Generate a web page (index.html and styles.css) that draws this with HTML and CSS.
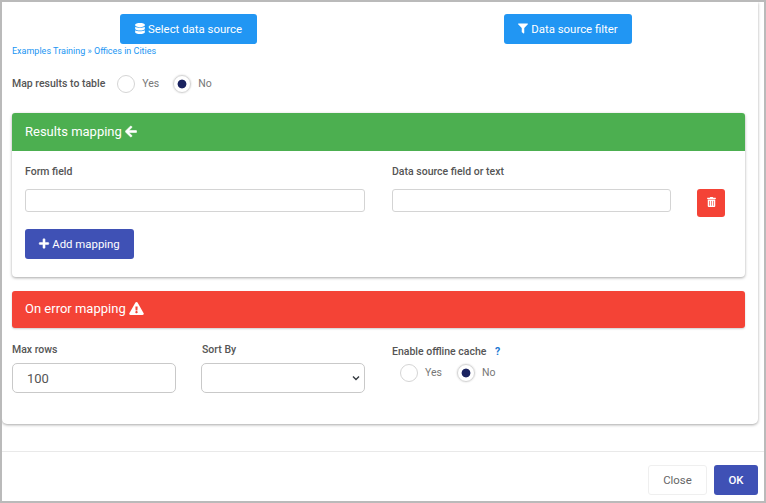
FILE: index.html
```html
<!DOCTYPE html>
<html>
<head>
<meta charset="UTF-8">
<title>Mapping</title>
<link rel="stylesheet" href="styles.css">
</head>
<body>
<div class="window">
  <div class="panel">
    <div class="source_buttons">
      <button class="btn btn_blue btn_select">
        <svg class="icon" viewBox="0 0 448 512"><path d="M448 73.143v45.714C448 159.143 347.667 192 224 192S0 159.143 0 118.857V73.143C0 32.857 100.333 0 224 0s224 32.857 224 73.143zM448 176v102.857C448 319.143 347.667 352 224 352S0 319.143 0 278.857V176c48.125 33.143 136.208 48.572 224 48.572S399.874 209.143 448 176zm0 160v102.857C448 479.143 347.667 512 224 512S0 479.143 0 438.857V336c48.125 33.143 136.208 48.572 224 48.572S399.874 369.143 448 336z"/></svg>
        Select data source
      </button>
      <button class="btn btn_blue btn_filter">
        <svg class="icon" viewBox="0 0 512 512"><path d="M487.976 0H24.028C2.71 0-8.047 25.866 7.058 40.971L192 225.941V432c0 7.831 3.821 15.17 10.237 19.662l80 55.98C298.02 518.69 320 507.493 320 487.98V225.941l184.947-184.97C520.021 25.896 509.338 0 487.976 0z"/></svg>
        Data source filter
      </button>
    </div>
    <div class="crumbs">Examples Training » Offices in Cities</div>

    <div class="map_row">
      <span class="field_label">Map results to table</span>
      <label class="radio radio_first"><input type="radio" name="maptable"> Yes</label>
      <label class="radio"><input type="radio" name="maptable" checked> No</label>
    </div>

    <div class="section">
      <div class="section_head head_green">Results mapping
        <svg class="head_icon" viewBox="0 0 448 512"><path d="M257.5 445.1l-22.2 22.2c-9.4 9.4-24.6 9.4-33.9 0L7 273c-9.4-9.4-9.4-24.6 0-33.9L201.4 44.7c9.4-9.4 24.6-9.4 33.9 0l22.2 22.2c9.5 9.5 9.3 25-.4 34.3L136.6 216H424c13.3 0 24 10.7 24 24v32c0 13.3-10.7 24-24 24H136.6l120.5 114.8c9.8 9.3 10 24.8.4 34.3z"/></svg>
      </div>
      <div class="section_body">
        <div class="mapping_row">
          <div class="col_form">
            <div class="field_label">Form field</div>
            <input class="text_input" type="text">
          </div>
          <div class="col_source">
            <div class="field_label">Data source field or text</div>
            <input class="text_input" type="text">
          </div>
          <button class="btn_trash">
            <svg viewBox="0 0 448 512"><path d="M32 464a48 48 0 0 0 48 48h288a48 48 0 0 0 48-48V128H32zm272-256a16 16 0 0 1 32 0v224a16 16 0 0 1-32 0zm-96 0a16 16 0 0 1 32 0v224a16 16 0 0 1-32 0zm-96 0a16 16 0 0 1 32 0v224a16 16 0 0 1-32 0zM432 32H312l-9.4-18.7A24 24 0 0 0 281.1 0H166.8a23.72 23.72 0 0 0-21.4 13.3L136 32H16A16 16 0 0 0 0 48v32a16 16 0 0 0 16 16h416a16 16 0 0 0 16-16V48a16 16 0 0 0-16-16z"/></svg>
          </button>
        </div>
        <button class="btn btn_indigo btn_add">
          <svg class="icon icon_bold" viewBox="0 0 448 512"><path d="M416 208H272V64c0-17.67-14.33-32-32-32h-32c-17.67 0-32 14.33-32 32v144H32c-17.67 0-32 14.33-32 32v32c0 17.67 14.33 32 32 32h144v144c0 17.67 14.33 32 32 32h32c17.67 0 32-14.33 32-32V304h144c17.67 0 32-14.33 32-32v-32c0-17.67-14.33-32-32-32z"/></svg>
          Add mapping
        </button>
      </div>
    </div>

    <div class="section_head head_red">On error mapping
      <svg class="head_icon warn_icon" viewBox="0 0 576 512"><path d="M569.517 440.013C587.975 472.007 564.806 512 527.94 512H48.054c-36.937 0-59.999-40.055-41.577-71.987L246.423 24.015c18.467-32.009 64.72-31.951 83.154 0l239.94 416zM288 354c-25.405 0-46 20.595-46 46s20.595 46 46 46 46-20.595 46-46-20.595-46-46-46zm-43.673-165.346l7.418 136c.347 6.364 5.609 11.346 11.982 11.346h48.546c6.373 0 11.635-4.982 11.982-11.346l7.418-136c.375-6.874-5.098-12.654-11.982-12.654h-63.383c-6.884 0-12.356 5.78-11.981 12.654z"/></svg>
    </div>

    <div class="options_row">
      <div class="col_rows">
        <div class="field_label">Max rows</div>
        <input class="big_input" type="text" value="100">
      </div>
      <div class="col_sort">
        <div class="field_label">Sort By</div>
        <select class="big_select"><option></option></select>
      </div>
      <div class="col_cache">
        <div class="field_label">Enable offline cache <span class="help">?</span></div>
        <div class="cache_radios">
          <label class="radio radio_first"><input type="radio" name="cache"> Yes</label>
          <label class="radio"><input type="radio" name="cache" checked> No</label>
        </div>
      </div>
    </div>
  </div>

  <div class="footer">
    <button class="btn btn_close">Close</button>
    <button class="btn btn_indigo btn_ok">OK</button>
  </div>
</div>
</body>
</html>
```

FILE: styles.css
```css
* {
  box-sizing: border-box;
}

html, body {
  height: 100%;
  margin: 0px;
}

body {
  background: #ffffff;
  font-family: Roboto, "Liberation Sans", sans-serif;
  color: #555555;
}

.window {
  display: flex;
  flex-direction: column;
  width: 766px;
  height: 503px;
  border: 2px solid #bababa;
  background: #ffffff;
  overflow: hidden;
}

.panel {
  width: 756px;
  height: 422px;
  padding: 12px 13px 0 10px;
  border-radius: 0 0 5px 5px;
  box-shadow: 0 1px 3px rgba(0,0,0,0.35);
}

.source_buttons {
  display: flex;
  padding-left: 108px;
  gap: 247px;
}

.btn {
  display: inline-flex;
  align-items: center;
  justify-content: center;
  height: 30px;
  padding: 0 0 1px;
  border: none;
  border-radius: 3px;
  font: 400 11.4px Roboto, "Liberation Sans", sans-serif;
  color: #ffffff;
}

.btn_blue {
  background: #2196f3;
}

.btn_indigo {
  background: #3f51b5;
}

.btn_select {
  width: 137px;
}

.btn_filter {
  width: 128px;
}

.icon {
  width: 10px;
  height: 11px;
  margin-right: 3px;
  fill: #ffffff;
}

.icon_bold {
  stroke: #ffffff;
  stroke-width: 24;
  overflow: visible;
}

.crumbs {
  margin-top: 1px;
  height: 12px;
  font-size: 9px;
  line-height: 12px;
  color: #2196f3;
}

.map_row {
  display: flex;
  align-items: center;
  height: 20px;
  margin-top: 17px;
}

.field_label {
  font-size: 10.5px;
  font-weight: 500;
  line-height: 14px;
  color: #555555;
}

.radio {
  display: inline-flex;
  align-items: center;
  font-size: 10.5px;
  color: #777777;
  line-height: 14px;
  margin-right: 15px;
}

.radio input {
  appearance: none;
  -webkit-appearance: none;
  width: 18px;
  height: 18px;
  margin: 0 7px 0 0;
  border: 1px solid #d5d5d5;
  border-radius: 50%;
  background: #ffffff;
}

.radio input:checked {
  background: radial-gradient(circle, #1a2360 0, #1a2360 4px, #ffffff 4.8px);
  box-shadow: 0 0 2px rgba(0,0,0,0.2);
}

.map_row .radio_first {
  margin-left: 12px;
  margin-right: 14px;
}

.section {
  margin-top: 19px;
  height: 164px;
  border-radius: 4px;
  box-shadow: 0 1px 3px rgba(0,0,0,0.35);
}

.section_head {
  height: 38px;
  padding-left: 13px;
  border-radius: 3px 3px 0 0;
  font-size: 13px;
  font-weight: 400;
  line-height: 37px;
  color: #ffffff;
}

.head_green {
  background: #4caf50;
}

.head_red {
  height: 37px;
  margin-top: 14px;
  border-radius: 3px;
  background: #f44336;
  line-height: 36px;
  box-shadow: 0 1px 2px rgba(0,0,0,0.2);
}

.head_icon {
  width: 12px;
  height: 13px;
  vertical-align: -2px;
  fill: #ffffff;
  stroke: #ffffff;
  stroke-width: 24;
}

.warn_icon {
  width: 15px;
  stroke-width: 0;
}

.section_body {
  padding: 14px 13px 0;
}

.mapping_row {
  display: flex;
}

.col_form {
  width: 340px;
  margin-right: 27px;
}

.col_source {
  width: 279px;
  margin-right: 26px;
}

.text_input {
  display: block;
  width: 100%;
  height: 23px;
  margin-top: 10px;
  border: 1px solid #d4d4d4;
  border-radius: 3px;
  background: #ffffff;
}

.btn_trash {
  width: 28px;
  height: 28px;
  margin-top: 24px;
  padding: 0;
  border: none;
  border-radius: 3px;
  background: #f44336;
}

.btn_trash svg {
  display: block;
  width: 9px;
  height: 10px;
  margin: 0 auto 2px;
  fill: #ffffff;
}

.btn_add {
  width: 109px;
  margin-top: 12px;
}

.options_row {
  display: flex;
  padding-top: 15px;
}

.col_rows {
  width: 164px;
  margin-right: 25px;
}

.col_sort {
  width: 164px;
  margin-right: 27px;
}

.col_sort .field_label {
  padding-left: 1px;
}

.col_cache {
  padding-top: 2px;
}

.big_input, .big_select {
  display: block;
  width: 100%;
  height: 30px;
  margin-top: 6px;
  padding: 0 14px;
  border: 1px solid #c9c9c9;
  border-radius: 5px;
  background: #ffffff;
  font: 400 13px Roboto, "Liberation Sans", sans-serif;
  color: #555555;
}

.big_select {
  appearance: none;
  -webkit-appearance: none;
  background: #ffffff url("data:image/svg+xml,%3Csvg xmlns='http://www.w3.org/2000/svg' width='8' height='6'%3E%3Cpath d='M1 1.5l3 3 3-3' fill='none' stroke='%23343a40' stroke-width='1.4'/%3E%3C/svg%3E") no-repeat right 4px center;
}

.help {
  margin-left: 6px;
  font-weight: 700;
  color: #1976d2;
}

.cache_radios {
  display: flex;
  margin-top: 5px;
  padding-left: 8px;
}

.footer {
  display: flex;
  justify-content: flex-end;
  gap: 7px;
  height: 50px;
  margin-top: 27px;
  padding: 13px 6px 0 0;
  border-top: 1px solid #e9e9e9;
}

.btn_close {
  width: 59px;
  border: 1px solid #efefef;
  background: #ffffff;
  color: #666666;
}

.btn_ok {
  width: 44px;
  font-weight: 500;
}
```
